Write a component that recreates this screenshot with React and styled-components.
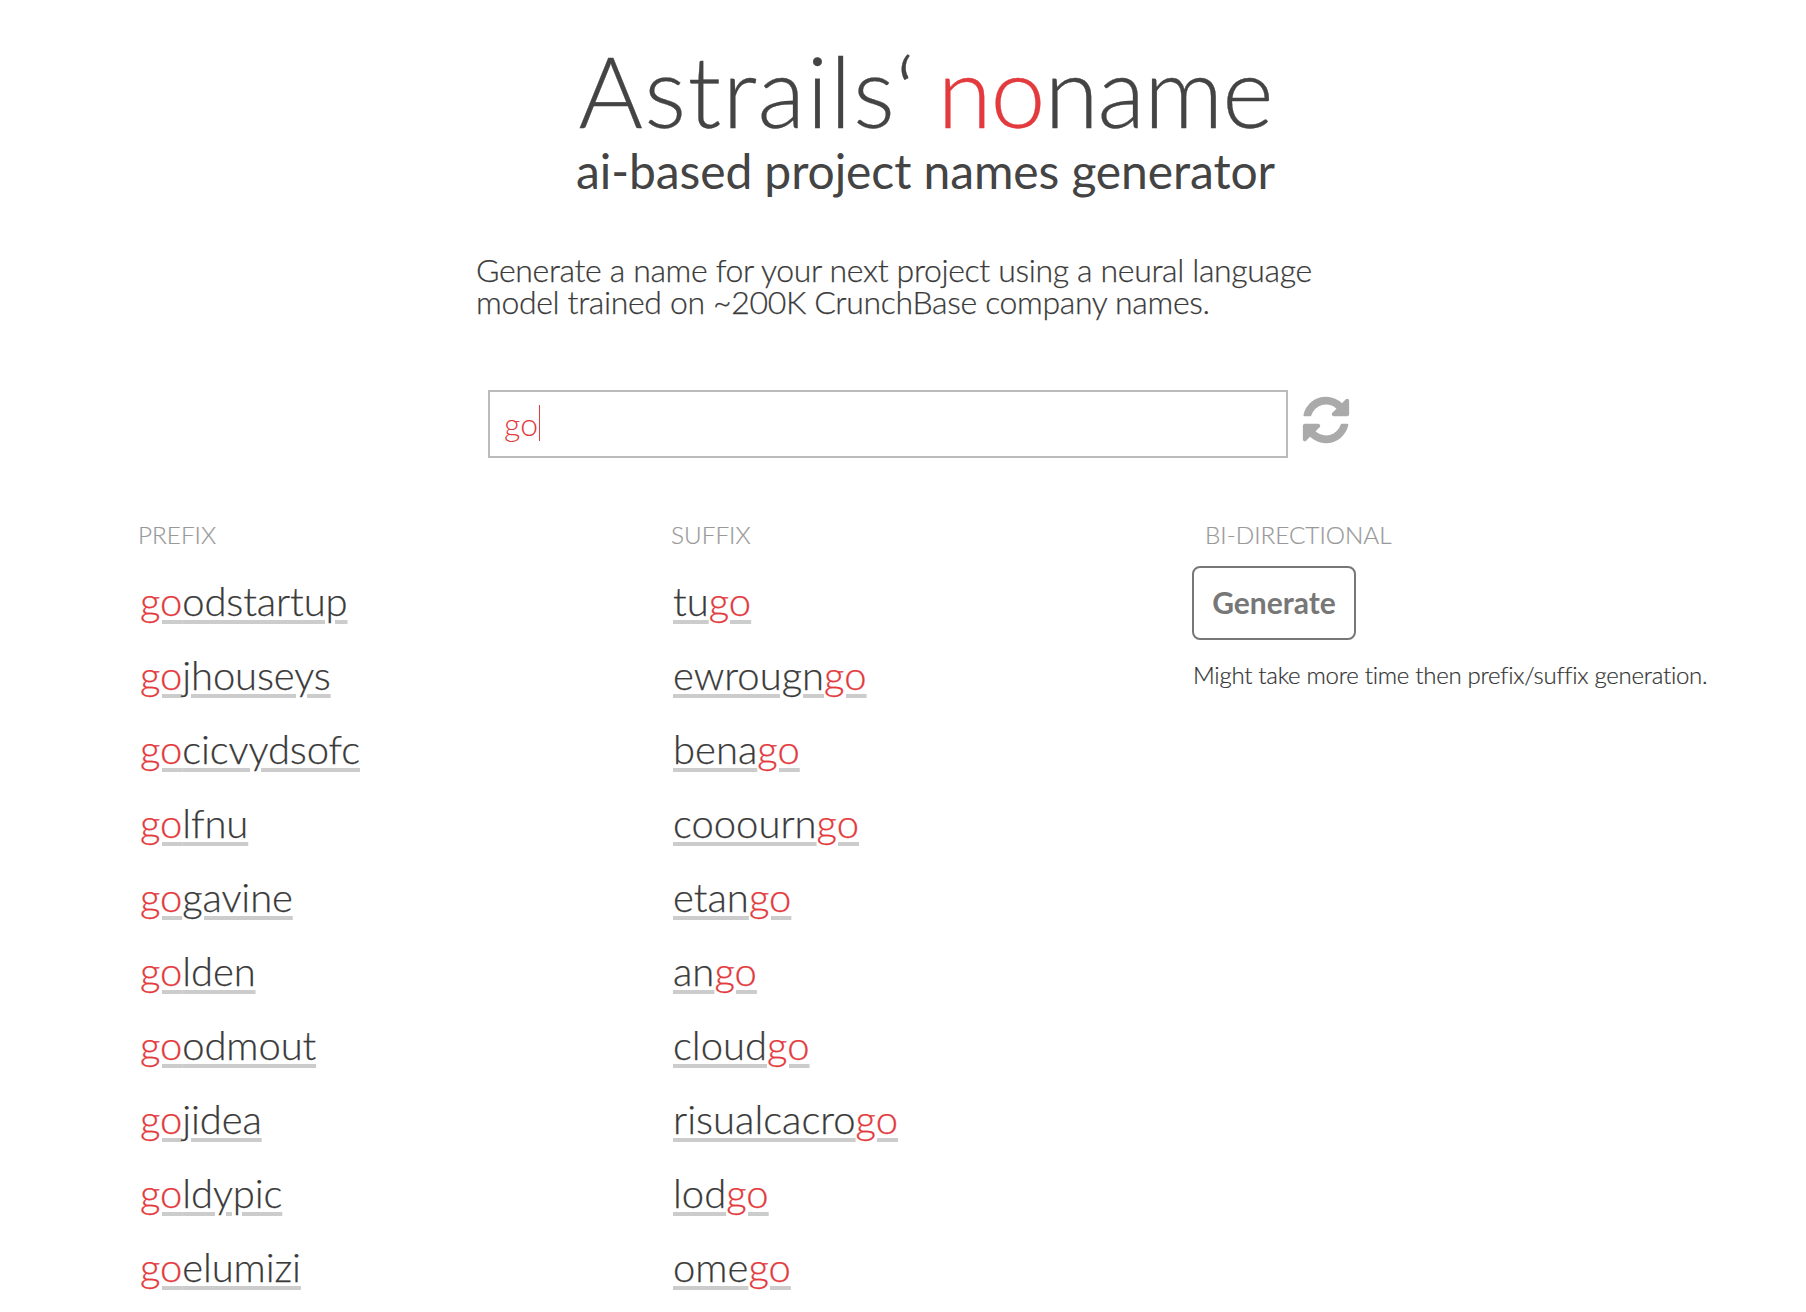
import React from "react";
import styled, { createGlobalStyle } from "styled-components";

const Global = createGlobalStyle`
  html, body { margin: 0; padding: 0; background: #fff; }
  body { font-family: Lato, "Open Sans", sans-serif; font-weight: 300; color: #444; height: 1312px; overflow: hidden; }
`;
const Page = styled.div`width: 1806px; height: 1312px; overflow: hidden;`;
const Header = styled.header`
  display: flex; flex-direction: column; align-items: center; padding-top: 30px; margin-left: 45px;
`;
const Title = styled.h1`
  margin: 0; font-size: 98.5px; line-height: 120px; font-weight: 300; color: #444; white-space: nowrap; word-spacing: -6px;
  -webkit-text-stroke: 0.3px #444;
`;
const Brand = styled.span`letter-spacing: 1.3px;`;
const Product = styled.span`letter-spacing: -1.1px;`;
const Red = styled.span`color: #e33a3d; -webkit-text-stroke-color: #e33a3d;`;
const Sub = styled.h2`
  margin: -9px 0 0; font-size: 48px; line-height: 60px; font-weight: 400; color: #444; letter-spacing: -0.1px; white-space: nowrap;
`;
const Intro = styled.p`
  margin: 53px 0 0 476px; font-size: 32px; line-height: 32px; font-weight: 300; color: #3a3a3a; white-space: nowrap; letter-spacing: -0.35px;
  -webkit-text-stroke: 0.25px #3a3a3a;
`;
const SearchRow = styled.div`
  display: flex; align-items: flex-start; margin: 72px 0 0 488px; gap: 14px;
`;
const InputBox = styled.div`
  box-sizing: border-box; width: 800px; height: 68px; border: 2px solid #bbb; display: flex; align-items: center; padding: 0 0 2px 14px;
  font-size: 32px; color: #e33a3d;
`;
const Caret = styled.span`display: inline-block; width: 1.5px; height: 36px; background: #e33a3d; margin-left: 1px;`;
const Reload = styled.svg`width: 54px; height: 54px; fill: #aaa; margin: 3px 0 0 -3px; flex: none;`;
const Columns = styled.div`
  display: grid; grid-template-columns: 533px 534px 1fr; margin: 62px 0 0 139px;
`;
const Col = styled.section`display: flex; flex-direction: column; align-items: flex-start;`;
const Label = styled.div`
  font-size: 24.3px; line-height: 30px; color: #999; font-weight: 300; margin-bottom: 14px; margin-left: -1px;
  -webkit-text-stroke: 0.2px #999;
`;
const Name = styled.a`
  display: block; height: 74px; line-height: 74px; font-size: 40px; color: #3a3a3a; font-weight: 300; margin-left: 1px;
  letter-spacing: ${(p) => p.$spacing};
  text-decoration: underline 4px #ccc; text-underline-offset: 4px; text-decoration-skip-ink: auto; white-space: nowrap;
  -webkit-text-stroke: 0.25px #3a3a3a;
`;
const Generate = styled.button`
  box-sizing: border-box; width: 164px; height: 74px; margin: 2px 0 0 -14px; border: 2px solid #777; border-radius: 8px; background: #fff;
  font-family: Lato, sans-serif; font-size: 30px; font-weight: 700; color: #777; padding: 0 0 2px;
`;
const Note = styled.p`
  margin: 20px 0 0 -13px; font-size: 24px; line-height: 30px; color: #333; font-weight: 300; white-space: nowrap; letter-spacing: -0.27px;
  -webkit-text-stroke: 0.2px #333;
`;

const prefix = ["odstartup","jhouseys","cicvydsofc","lfnu","gavine","lden","odmout","jidea","ldypic","elumizi"];
const suffix = ["tu","ewrougn","bena","cooourn","etan","an","cloud","risualcacro","lod","ome"];

export default function App() {
  return (
    <Page>
      <Global />
      <Header>
        <Title><Brand>Astrails‘</Brand> <Product><Red>no</Red>name</Product></Title>
        <Sub>ai-based project names generator</Sub>
      </Header>
      <Intro>Generate a name for your next project using a neural language<br />model trained on ~200K CrunchBase company names.</Intro>
      <SearchRow>
        <InputBox>go<Caret /></InputBox>
        <Reload viewBox="0 0 1792 1792"><path d="M1639 1056q0 5-1 7-64 268-268 434.5t-478 166.5q-146 0-282.5-55t-243.5-157l-129 129q-19 19-45 19t-45-19-19-45v-448q0-26 19-45t45-19h448q26 0 45 19t19 45-19 45l-137 137q71 66 161 102t187 36q134 0 250-65t186-179q11-17 53-117 8-23 30-23h192q13 0 22.5 9.5t9.5 22.5zm25-800v448q0 26-19 45t-45 19h-448q-26 0-45-19t-19-45 19-45l138-138q-148-137-349-137-134 0-250 65t-186 179q-11 17-53 117-8 23-30 23h-199q-13 0-22.5-9.5t-9.5-22.5v-7q65-268 270-434.5t480-166.5q146 0 284 55.5t245 156.5l130-129q19-19 45-19t45 19 19 45z" /></Reload>
      </SearchRow>
      <Columns>
        <Col>
          <Label>PREFIX</Label>
          {prefix.map((s) => <Name key={s} $spacing="-0.12px"><Red>go</Red>{s}</Name>)}
        </Col>
        <Col>
          <Label>SUFFIX</Label>
          {suffix.map((s) => <Name key={s} $spacing="0">{s}<Red>go</Red></Name>)}
        </Col>
        <Col>
          <Label>BI-DIRECTIONAL</Label>
          <Generate>Generate</Generate>
          <Note>Might take more time then prefix/suffix generation.</Note>
        </Col>
      </Columns>
    </Page>
  );
}
